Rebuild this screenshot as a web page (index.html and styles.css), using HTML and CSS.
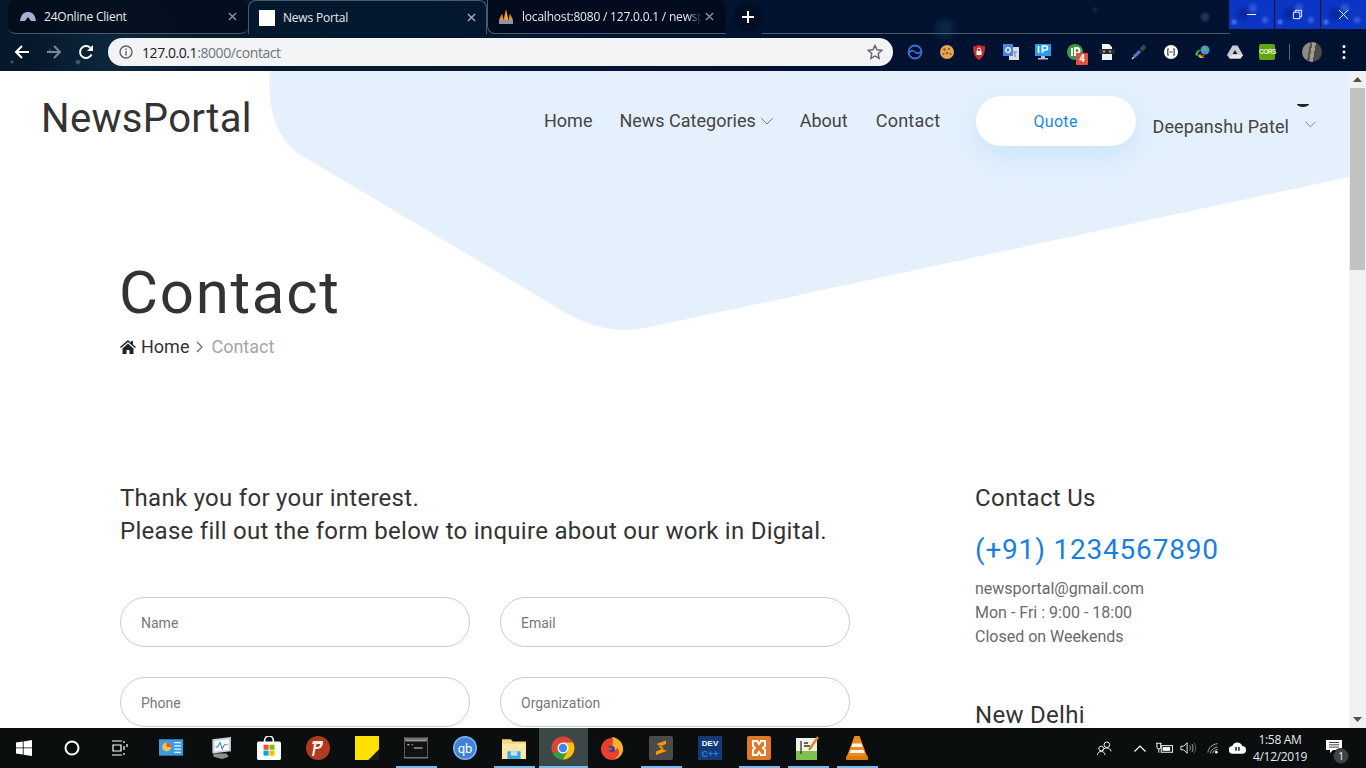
FILE: index.html
```html
<!DOCTYPE html>
<html lang="en">
<head>
<meta charset="utf-8">
<title>News Portal</title>
<link rel="stylesheet" href="styles.css">
</head>
<body>
<div class="browser">
  <div class="chrome">
  <div class="tabstrip">
    <div class="tab tab-inactive tab-first">
      <svg class="favicon" viewBox="0 0 16 16"><path d="M0 12C1 5 4 3 8 3s7 2 8 9H11L8 8l-3 4Z" fill="#9fb0d0"/></svg>
      <span class="tab-title">24Online Client</span>
      <svg class="tab-x" viewBox="0 0 10 10"><path d="M1 1l8 8M9 1L1 9" stroke="#8b96a3" stroke-width="1.5"/></svg>
    </div>
    <div class="tab tab-active">
      <span class="favicon favicon-white"></span>
      <span class="tab-title">News Portal</span>
      <svg class="tab-x" viewBox="0 0 10 10"><path d="M1 1l8 8M9 1L1 9" stroke="#a4adb6" stroke-width="1.5"/></svg>
    </div>
    <div class="tab tab-inactive tab-third">
      <svg class="favicon" viewBox="0 0 16 16"><path d="M1 11L4 4.500l1.500 6.500ZM5.500 11L8 0l2.500 11ZM10.500 11L12 4.500 15 11Z" fill="#e8912a"/><path d="M8 3l1.500 8h-1Z" fill="#f6cf6b"/><rect x="1" y="11" width="14" height="4" fill="#8d93a8"/></svg>
      <span class="tab-title tab-fade">localhost:8080 / 127.0.0.1 / newsp</span>
      <svg class="tab-x" viewBox="0 0 10 10"><path d="M1 1l8 8M9 1L1 9" stroke="#8b96a3" stroke-width="1.5"/></svg>
    </div>
    <div class="newtab"><svg viewBox="0 0 12 12"><path d="M6 0v12M0 6h12" stroke="#fff" stroke-width="2"/></svg></div>
    <div class="tab-rule"></div>
    <div class="winctl">
      <div class="winbtn"><svg viewBox="0 0 12 12"><path d="M1 6h10" stroke="#fff"/></svg></div>
      <div class="winbtn"><svg viewBox="0 0 12 12"><path d="M1.500 3.500h7v7h-7ZM3.500 3.500v-2h7v7h-2" fill="none" stroke="#fff"/></svg></div>
      <div class="winbtn"><svg viewBox="0 0 12 12"><path d="M1 1l10 10M11 1L1 11" stroke="#fff"/></svg></div>
    </div>
  </div>
  <div class="toolbar">
    <div class="navbtns">
      <svg class="navicon" viewBox="0 0 16 16"><path d="M15 8H2M8 2L2 8l6 6" fill="none" stroke="#fff" stroke-width="2"/></svg>
      <svg class="navicon" viewBox="0 0 16 16"><path d="M1 8h13M8 2l6 6-6 6" fill="none" stroke="#7b8791" stroke-width="2"/></svg>
      <svg class="navicon" viewBox="0 0 16 16"><path d="M13.500 10.500A6 6 0 1 1 12.300 3.800" fill="none" stroke="#fff" stroke-width="2"/><path d="M15 1v6H9Z" fill="#fff"/></svg>
    </div>
    <div class="omnibox">
      <svg class="info" viewBox="0 0 14 14"><circle cx="7" cy="7" r="6" fill="none" stroke="#5f6368" stroke-width="1.400"/><path d="M7 6v4.500M7 3.500v1.500" stroke="#5f6368" stroke-width="1.400"/></svg>
      <span class="url"><span class="url-host">127.0.0.1</span>:8000/contact</span>
      <svg class="star" viewBox="0 0 16 16"><path d="M8 1.500l2 4.300 4.700.6-3.500 3.200.9 4.700L8 12l-4.100 2.300.9-4.700L1.300 6.400 6 5.800Z" fill="none" stroke="#5f6368" stroke-width="1.400"/></svg>
    </div>
    <div class="exts">
      <span class="ext"><svg viewBox="0 0 16 16"><circle cx="8" cy="8" r="6.500" fill="none" stroke="#3f6fd8" stroke-width="1.800"/><path d="M2 9c2-3 4-3 6-1s4 2 6-1" fill="none" stroke="#3f6fd8" stroke-width="1.600"/></svg></span>
      <span class="ext"><svg viewBox="0 0 16 16"><circle cx="8" cy="8" r="7" fill="#e3a455"/><g fill="#8a5320"><circle cx="5.500" cy="5.500" r="1.200"/><circle cx="10" cy="5" r="1"/><circle cx="8" cy="9" r="1.200"/><circle cx="4.500" cy="10" r="1"/><circle cx="11.500" cy="10" r="1"/></g></svg></span>
      <span class="ext"><svg viewBox="0 0 16 16"><path d="M2 2.500L8 1l6 1.500c0 6-1 10-6 13.500C3 12.500 2 8.500 2 2.500Z" fill="#c62f2f"/><rect x="5.500" y="7" width="5" height="4" fill="#fff"/><path d="M6.500 7V5.500a1.500 1.500 0 0 1 3 0V7" fill="none" stroke="#fff"/></svg></span>
      <span class="ext"><svg viewBox="0 0 16 16"><rect x="6" y="3" width="10" height="13" fill="#d9dde1"/><rect x="0" y="0" width="10" height="12" fill="#4a86e8"/><circle cx="5" cy="6" r="2.300" fill="none" stroke="#fff" stroke-width="1.200"/><path d="M10 8h4M12 8v5" stroke="#7a8087"/></svg></span>
      <span class="ext"><svg viewBox="0 0 16 16"><rect width="16" height="12" fill="#2a9bf0"/><rect x="6" y="12" width="4" height="2" fill="#b9c2c9"/><rect x="3" y="14" width="10" height="1.500" fill="#b9c2c9"/><path d="M3.500 2v7M7.500 9V2h3a2 2 0 0 1 0 4h-3" fill="none" stroke="#fff" stroke-width="1.700"/></svg></span>
      <span class="ext ext-badged"><svg viewBox="0 0 16 16"><circle cx="8" cy="8" r="8" fill="#3e9a45"/><path d="M5 4v8M8 12V4h2a2.500 2.500 0 0 1 0 5H8" fill="none" stroke="#fff" stroke-width="2"/></svg><span class="badge">4</span></span>
      <span class="ext"><svg viewBox="0 0 16 16"><path d="M3 0h7l3 3v13H3Z" fill="#f1f1f1"/><rect x="0" y="5" width="16" height="5" rx="1.500" fill="#2b2b2b"/><circle cx="5" cy="7.500" r="1.200" fill="#999"/><circle cx="11" cy="7.500" r="1.200" fill="#999"/></svg></span>
      <span class="ext"><svg viewBox="0 0 16 16"><path d="M3 13l6-6" stroke="#4a7fd6" stroke-width="3"/><path d="M10 6l4-4" stroke="#444" stroke-width="4"/><path d="M1 15l2-2" stroke="#d5d5d5" stroke-width="1.500"/></svg></span>
      <span class="ext"><svg viewBox="0 0 16 16"><circle cx="8" cy="8" r="7" fill="#fff"/><path d="M6 5H4.800v6H6M10 5h1.200v6H10M6.500 8h3" fill="none" stroke="#333" stroke-width="1.100"/></svg></span>
      <span class="ext"><svg viewBox="0 0 16 16"><path d="M0 11C1 6 4 5 6 6c-2 1-3 3-3 6Z" fill="#3aa648"/><path d="M3 12c1 2 4 3 7 1-2 0-4-1-5-3Z" fill="#e2b32c"/><path d="M5 10c1 1.500 3 2 4.500 1" fill="none" stroke="#c3342b" stroke-width="1.200"/><circle cx="10" cy="6" r="4.500" fill="#4a95d9"/><path d="M8 3l4 1-1 3-2 0Z" fill="#67b24e"/></svg></span>
      <span class="ext"><svg viewBox="0 0 16 16"><path d="M5.500 1.500h5L16 11l-2.500 3.500h-11L0 11Z" fill="#c8cbcf"/><path d="M5 11h11l-2.500 3.500h-11Z" fill="#e9eaec"/><path d="M8 6l2.300 4H5.700Z" fill="#0a1a33"/></svg></span>
      <span class="ext"><span class="cors">CORS</span></span>
    </div>
    <span class="tool-sep"></span>
    <span class="avatar"></span>
    <svg class="kebab" viewBox="0 0 4 16"><circle cx="2" cy="2.500" r="1.500" fill="#fff"/><circle cx="2" cy="8" r="1.500" fill="#fff"/><circle cx="2" cy="13.500" r="1.500" fill="#fff"/></svg>
  </div>
  </div>

  <div class="viewport">
    <main class="page">
      <svg class="blob" viewBox="0 0 1349 270" aria-hidden="true"><path d="M270 0C266 38 278 68 299 83L551 233C578 251 610 264 645 257L1349 106V0Z" fill="#e4f1fd"/></svg>
      <header class="site-header">
        <div class="logo">NewsPortal</div>
        <nav class="nav">
          <a class="nav-link">Home</a>
          <a class="nav-link">News Categories<svg class="chev" viewBox="0 0 12 7"><path d="M.5.500L6 6 11.500.500" fill="none" stroke="#777"/></svg></a>
          <a class="nav-link">About</a>
          <a class="nav-link">Contact</a>
        </nav>
        <a class="quote">Quote</a>
        <div class="user">
          <span class="user-name">Deepanshu Patel</span>
          <svg class="chev user-chev" viewBox="0 0 12 7"><path d="M.5.500L6 6 11.500.500" fill="none" stroke="#777"/></svg>
          <span class="user-mark"></span>
        </div>
      </header>
      <section class="hero">
        <h1 class="hero-title">Contact</h1>
        <div class="crumbs">
          <svg class="home" viewBox="0 0 16 14"><path d="M8 0L0 7l1 1 7-6 7 6 1-1-3-2.600V1h-2v1.700ZM2.500 8.500V14H6.500v-4h3v4h4V8.500L8 3.500Z" fill="#222"/></svg>
          <span class="crumb">Home</span>
          <svg class="crumb-sep" viewBox="0 0 7 12"><path d="M1 1l5 5-5 5" fill="none" stroke="#666" stroke-width="1.200"/></svg>
          <span class="crumb crumb-current">Contact</span>
        </div>
      </section>
      <section class="content">
        <div class="form-col">
          <h2 class="lead">Thank you for your interest.<br>Please fill out the form below to inquire about our work in Digital.</h2>
          <form class="form-grid">
            <div class="field">Name</div>
            <div class="field">Email</div>
            <div class="field">Phone</div>
            <div class="field">Organization</div>
          </form>
        </div>
        <aside class="info-col">
          <h3 class="info-title">Contact Us</h3>
          <div class="phone">(+91) 1234567890</div>
          <p class="details">newsportal@gmail.com<br>Mon - Fri : 9:00 - 18:00<br>Closed on Weekends</p>
          <h3 class="info-title city">New Delhi</h3>
        </aside>
      </section>
    </main>
    <div class="scrollbar">
      <div class="sb-btn"><svg viewBox="0 0 9 5"><path d="M4.500 0L9 5H0Z" fill="#505050"/></svg></div>
      <div class="sb-track"><div class="sb-thumb"></div></div>
      <div class="sb-btn"><svg viewBox="0 0 9 5"><path d="M0 0h9L4.500 5Z" fill="#505050"/></svg></div>
    </div>
  </div>

  <footer class="taskbar">
    <div class="tb-item tb-sys"><svg class="tb-ic" viewBox="0 0 16 16"><path d="M0 2.500L6.800 1.500V7.500H0ZM7.600 1.400L16 0V7.500H7.600ZM0 8.300H6.800V14.500L0 13.500ZM7.600 8.300H16V16L7.600 14.700Z" fill="#fff"/></svg></div>
    <div class="tb-item tb-sys"><svg class="tb-ic" viewBox="0 0 16 16"><circle cx="8" cy="8" r="6.500" fill="none" stroke="#fff" stroke-width="2"/></svg></div>
    <div class="tb-item tb-sys"><svg class="tb-ic" viewBox="0 0 16 16"><path d="M0 1h10M0 15h10M1 5h8v6H1ZM12 1v2M12 6v4M12 13v2M15 4v3" fill="none" stroke="#fff" stroke-width="1.200"/></svg></div>
    <div class="tb-item tb-gap"><svg class="tb-ic tb-big" viewBox="0 0 22 16"><rect width="22" height="15" fill="#3a9be0"/><circle cx="7" cy="7" r="4" fill="#f6c04d"/><path d="M7 7V3a4 4 0 0 1 4 4Z" fill="#e4552c"/><path d="M14 3h6M14 6h6M14 9h6M14 12h6" stroke="#dff" stroke-width="1.200"/></svg></div>
    <div class="tb-item"><svg class="tb-ic tb-big" viewBox="0 0 22 20"><path d="M4 2l17-2v13L4 15Z" fill="#cfd3d6"/><path d="M6 3.500l13-1.500v9.500L6 13Z" fill="#fff"/><path d="M7 9l2 0 2-4 2 6 2-4 3 0" fill="none" stroke="#3b8ed8"/><path d="M5 15h12l2 3-6 2-8-2Z" fill="#8d9194"/></svg></div>
    <div class="tb-item"><svg class="tb-ic tb-big" viewBox="0 0 22 22"><path d="M7 6V4a4 4 0 0 1 8 0v2" fill="none" stroke="#fff" stroke-width="1.500"/><rect y="5" width="22" height="17" rx="1.500" fill="#fff"/><rect x="6" y="8" width="4.600" height="4.600" fill="#f25022"/><rect x="11.400" y="8" width="4.600" height="4.600" fill="#7fba00"/><rect x="6" y="13.400" width="4.600" height="4.600" fill="#00a4ef"/><rect x="11.400" y="13.400" width="4.600" height="4.600" fill="#ffb900"/></svg></div>
    <div class="tb-item"><svg class="tb-ic tb-big" viewBox="0 0 24 24"><circle cx="12" cy="12" r="12" fill="#b03a1e"/><path d="M7 5h10v1c0 5-3 7-6 7H9.500L8 20H6L8 8H6Z" fill="#f2ece6"/><path d="M10.500 8l-.6 3H11c2 0 3-1 3.200-3Z" fill="#b03a1e"/></svg></div>
    <div class="tb-item"><svg class="tb-ic tb-big" viewBox="0 0 18 18"><rect width="18" height="18" fill="#ffe100"/><path d="M10 18l8-8v8Z" fill="#1c1c1c"/></svg></div>
    <div class="tb-item tb-open"><svg class="tb-ic tb-big" viewBox="0 0 22 18"><rect width="22" height="18" fill="#111" stroke="#9a9a9a"/><rect x="1" y="1" width="20" height="2" fill="#9a9a9a"/><path d="M3 6h2M7 6h1M9 9h8" stroke="#ddd"/></svg></div>
    <div class="tb-item"><svg class="tb-ic tb-big" viewBox="0 0 24 24"><circle cx="12" cy="12" r="12" fill="#7fb4f0"/><circle cx="12" cy="12" r="10.500" fill="#3f83d9"/><text x="12" y="16.500" text-anchor="middle" class="qb">qb</text></svg></div>
    <div class="tb-item tb-open tb-split"><svg class="tb-ic tb-big" viewBox="0 0 22 20"><path d="M0 2h8l2 2h12v16H0Z" fill="#f6d77c"/><rect y="6" width="22" height="14" fill="#fbe7a6"/><path d="M5 13h12v7H5Z" fill="#3aa7e4"/><path d="M8 13h6v4H8Z" fill="#bfe6f8"/></svg></div>
    <div class="tb-item tb-open tb-active"><svg class="tb-ic tb-big" viewBox="0 0 24 24"><circle cx="12" cy="12" r="11.500" fill="#db4437"/><path d="M12 12L2 18a11.500 11.500 0 0 0 10 5.500l5-9Z" fill="#2f9e44"/><path d="M12 6.500h10A11.500 11.500 0 0 1 12 23.500l5-9Z" fill="#f4c20d"/><circle cx="12" cy="12" r="5.500" fill="#fff"/><circle cx="12" cy="12" r="4.200" fill="#4285f4"/></svg></div>
    <div class="tb-item"><svg class="tb-ic tb-big" viewBox="0 0 24 24"><circle cx="12" cy="13" r="11" fill="#e8402c"/><path d="M12 1c7 1 11 6 11 12s-5 10-9 10c5-2 7-8 3-11-1 2-3 3-5 2 0-4 2-8 0-13Z" fill="#fbb12d"/><path d="M7 11c2-2 8-2 8 2s-5 4-7 1c2 1 4 .5 4-1s-3-2-5-2Z" fill="#3a3f9e"/></svg></div>
    <div class="tb-item tb-open"><svg class="tb-ic tb-big" viewBox="0 0 24 24"><rect width="24" height="24" rx="2" fill="#4a4a4a"/><path d="M17 4.500L7.500 8l7.500 4-8 3.500v3.500L17.500 15 9.500 11l7.500-3Z" fill="#ff9800"/></svg></div>
    <div class="tb-item"><svg class="tb-ic tb-big" viewBox="0 0 24 24"><rect width="24" height="24" fill="#123a78"/><text x="12" y="10" text-anchor="middle" class="dev">DEV</text><text x="12" y="21" text-anchor="middle" class="cpp">C++</text></svg></div>
    <div class="tb-item tb-open"><svg class="tb-ic tb-big" viewBox="0 0 24 24"><rect width="24" height="24" rx="2" fill="#e07a2a"/><path d="M6 5h4l2 3 2-3h4v5l-2 2 2 2v5h-4l-2-3-2 3H6v-5l2-2-2-2Z" fill="none" stroke="#fff" stroke-width="2"/></svg></div>
    <div class="tb-item tb-open"><svg class="tb-ic tb-big" viewBox="0 0 24 24"><rect y="2" width="21" height="22" fill="#f2f2e8"/><rect y="15" width="21" height="9" fill="#7dc24b"/><path d="M5 5v13M8 7h4M8 10h6" stroke="#333" stroke-width="1.300"/><path d="M22 1L13 14" stroke="#d98b2b" stroke-width="2.500"/></svg></div>
    <div class="tb-item tb-open"><svg class="tb-ic tb-big" viewBox="0 0 22 24"><path d="M8.500 0h5L21 20H1Z" fill="#f08a1d"/><path d="M6.600 7.500h8.800l1.300 3.500H5.300ZM4.500 14h13l1 3h-15Z" fill="#f4f4f4"/><rect y="20" width="22" height="4" rx="1" fill="#e07b12"/></svg></div>
    <div class="tray">
      <svg class="tray-ic tray-people" viewBox="0 0 16 16"><circle cx="10.500" cy="4" r="3" fill="none" stroke="#fff"/><path d="M6 11c.5-2.500 2-3.500 4.500-3.500S14.500 9 15 11" fill="none" stroke="#fff"/><circle cx="4.500" cy="8" r="2.500" fill="none" stroke="#fff"/><path d="M0.500 15c.3-2.500 1.600-3.800 4-3.800s3.700 1.300 4 3.800" fill="none" stroke="#fff"/></svg>
      <svg class="tray-ic tray-chev" viewBox="0 0 12 7"><path d="M.5 6.500L6 1l5.500 5.500" fill="none" stroke="#fff" stroke-width="1.200"/></svg>
      <svg class="tray-ic tray-batt" viewBox="0 0 18 12"><rect x="5.500" y="3.500" width="12" height="7" fill="none" stroke="#fff"/><rect x="7" y="5" width="8" height="4" fill="#fff"/><path d="M1 1v4a2 2 0 0 0 4 0V1M3 7v4M0 1h6" fill="none" stroke="#fff"/></svg>
      <svg class="tray-ic tray-vol" viewBox="0 0 18 14"><path d="M1 5h3l4-4v12L4 9H1Z" fill="none" stroke="#fff"/><path d="M11 4c1 2 1 4 0 6M13.500 2.500c1.500 3 1.500 6 0 9" fill="none" stroke="#aaa"/><path d="M16 1c2 4 2 8 0 12" fill="none" stroke="#666"/></svg>
      <svg class="tray-ic tray-wifi" viewBox="0 0 16 14"><path d="M1 12C2 6 6 2 13 1M4 13c1-4 4-7 9-8M7 13c.5-2 2-4 6-5" fill="none" stroke="#c8c8c8"/><circle cx="11.500" cy="11.500" r="1.600" fill="#fff"/></svg>
      <svg class="tray-ic tray-cloud" viewBox="0 0 18 12"><path d="M4 12a4 4 0 0 1-.5-8A5.500 5.500 0 0 1 14 4a4 4 0 0 1 0 8Z" fill="#fff"/><path d="M7.500 5v4M10.500 5v4" stroke="#111" stroke-width="1.500"/></svg>
      <div class="clock"><span>1:58 AM</span><span>4/12/2019</span></div>
      <div class="notif"><svg viewBox="0 0 16 13"><path d="M0 0h16v10H7l-3 3v-3H0Z" fill="#fff"/><path d="M3 2.500h10M3 4.800h10M3 7.100h10" stroke="#111" stroke-width=".8"/></svg><span class="notif-count">1</span></div>
    </div>
  </footer>
</div>
</body>
</html>
```
FILE: styles.css
```css
* { box-sizing: border-box; }
html, body { margin: 0; height: 100%; overflow: hidden; }
body { font-family: Roboto, "Liberation Sans", sans-serif; background: #fff; color: #333; }
.browser { width: 1366px; height: 768px; display: flex; flex-direction: column; overflow: hidden; }

/* browser frame with a starfield theme */
.chrome {
  flex: none; height: 71px;
  background-color: #011230;
  background-image:
    radial-gradient(circle at 12px 62px, rgba(150,190,210,.35) 0 1px, transparent 2px),
    radial-gradient(circle at 78px 62px, rgba(150,190,210,.35) 0 1.500px, transparent 3px),
    radial-gradient(circle at 50px 50px, rgba(120,170,190,.22) 0 1px, transparent 2px),
    radial-gradient(circle at 1205px 17px, rgba(70,100,140,.45) 0 2px, transparent 6px),
    radial-gradient(circle at 1095px 10px, rgba(50,80,120,.3) 0 1px, transparent 4px),
    radial-gradient(circle at 945px 29px, rgba(40,90,120,.3) 0 3px, transparent 14px),
    radial-gradient(circle at 120px 55px, rgba(40,90,120,.22) 0 6px, transparent 90px),
    linear-gradient(90deg, #06192b 0, #04182f 400px, #011230 820px, #011230 100%);
}

/* tab strip */
.tabstrip { height: 34px; display: flex; align-items: stretch; padding-left: 8px; }
.tab {
  width: 239px; height: 34px; display: flex; align-items: center; padding: 0 11px 0 12px;
  border-radius: 8px 8px 0 0; color: #e6eaee; font: 12px "Open Sans", sans-serif; letter-spacing: -.2px;
}
.tab-inactive { background: rgba(1,6,20,.62); border-bottom: 1px solid #4c5b6b; }
.tab-first { width: 240px; border-radius: 8px 8px 8px 8px / 8px 8px 6px 6px; }
.tab-active { border: 1px solid #4c5b6b; border-bottom: 0; width: 239px; padding: 0 10px; }
.tab-third { border-left: 1px solid #4c5b6b; border-radius: 0 8px 0 8px; padding: 0 12px 0 10px; }
.tab-third .tab-x { margin-left: 3px; }
.favicon { width: 16px; height: 16px; flex: none; margin-right: 8px; }
.favicon-white { background: #fff; }
.tab-title { flex: 1; white-space: nowrap; overflow: hidden; }
.tab-fade { -webkit-mask-image: linear-gradient(90deg, #000 92%, transparent 100%); mask-image: linear-gradient(90deg, #000 92%, transparent 100%); }
.tab-x { width: 9px; height: 9px; flex: none; margin-left: 8px; }
.newtab { width: 28px; height: 28px; margin: 3px 0 0 8px; border-radius: 50%; background: #020e26; display: flex; align-items: center; justify-content: center; flex: none; }
.newtab svg { width: 12px; height: 12px; }
.tab-rule { flex: 1; border-bottom: 1px solid #4c5b6b; }
.winctl { display: flex; gap: 1px; height: 29px; margin-left: -1px; position: relative; flex: none; width: 137px; }
.winbtn {
  flex: 1; display: flex; align-items: center; justify-content: center;
  background-color: #0b35c4;
  background-image:
    radial-gradient(circle at 5px 22px, rgba(120,165,255,.5) 0 1px, transparent 4px),
    radial-gradient(circle at 24px 8px, rgba(110,150,250,.32) 0 2px, transparent 6px),
    radial-gradient(circle at 14px 14px, rgba(4,24,120,.45) 0 2px, transparent 9px),
    radial-gradient(circle at 36px 20px, rgba(120,165,255,.35) 0 1px, transparent 5px);
  background-size: 45px 29px;
}
.winbtn svg { width: 11px; height: 11px; }

/* toolbar */
.toolbar { height: 37px; display: flex; align-items: center; padding: 0 14px 1px 6px; }
.navbtns { display: flex; align-items: center; gap: 16px; width: 94px; margin-left: 8px; flex: none; }
.navicon { width: 16px; height: 16px; }
.omnibox { width: 785px; height: 28px; flex: none; border-radius: 14px; background: #f1f3f4; display: flex; align-items: center; padding: 0 10px 0 11px; }
.info { width: 14px; height: 14px; flex: none; margin-right: 9px; }
.url { flex: 1; font: 14px "Open Sans", sans-serif; letter-spacing: -.43px; color: #70757a; }
.url-host { color: #202124; }
.star { width: 16px; height: 16px; flex: none; }
.exts { display: flex; align-items: center; margin-left: 6px; flex: none; }
.ext { width: 32px; height: 28px; display: flex; align-items: center; justify-content: center; position: relative; }
.ext svg { width: 16px; height: 16px; }
.badge { position: absolute; left: 17px; top: 15px; width: 12px; height: 12px; background: #e74c3c; color: #fff; font: bold 10px/12px Roboto, sans-serif; text-align: center; border-radius: 1px; }
.cors { width: 16px; height: 16px; background: #5fa60e; color: #e9f7d4; font: bold 6.500px/16px "Liberation Sans", sans-serif; letter-spacing: -.5px; text-align: center; border-radius: 2px; white-space: nowrap; }
.tool-sep { width: 1px; height: 16px; background: #5a6672; margin: 0 12px 0 6px; flex: none; }
.avatar { width: 20px; height: 20px; border-radius: 50%; flex: none; background: linear-gradient(100deg, #8d8a82 0 35%, #555 35% 45%, #a09c92 45% 60%, #4a4a4a 60%); }
.kebab { width: 4px; height: 16px; margin-left: 20px; flex: none; }

/* page */
.viewport { height: 657px; flex: none; display: flex; overflow: hidden; }
.page { width: 1349px; flex: none; position: relative; overflow: hidden; background: #fff; }
.blob { position: absolute; left: 0; top: 0; width: 1349px; height: 270px; }
.site-header { position: relative; display: flex; align-items: flex-start; height: 100px; padding: 25px 0 0 41px; }
.logo { font-size: 40px; line-height: 46px; color: #333; width: 503px; flex: none; letter-spacing: .35px; }
.nav { display: flex; gap: 27px; font-size: 18px; line-height: 50px; color: #444; flex: none; }
.nav-link { display: flex; align-items: center; }
.nav-link:last-child { margin-left: 1px; letter-spacing: .25px; }
.chev { width: 12px; height: 7px; margin-left: 5px; }
.quote { width: 160px; height: 50px; border-radius: 25px; background: #fff; margin-left: 35.250px; color: #1a86e8; font-size: 16px; letter-spacing: .3px; display: flex; align-items: center; justify-content: center; flex: none; box-shadow: 0 10px 30px rgba(26,134,232,.13); }
.user { position: relative; margin-left: 17px; font-size: 18px; letter-spacing: .08px; color: #444; display: flex; align-items: center; height: 60px; flex: none; }
.user-name { white-space: nowrap; }
.user-chev { margin-left: 16px; margin-bottom: 4px; width: 11px; }
.user-mark { position: absolute; right: 7px; top: 8px; width: 12px; height: 3px; background: #222; border-radius: 0 0 6px 6px / 0 0 3px 3px; }
.hero { position: relative; padding: 87px 0 0 119px; height: 300px; }
.hero-title { margin: 0; font-size: 60px; font-weight: 400; line-height: 70px; color: #333; letter-spacing: 1.700px; }
.crumbs { display: flex; align-items: center; font-size: 18px; line-height: 24px; margin: 7px 0 0 1px; }
.home { width: 16px; height: 14px; margin-right: 5px; }
.crumb { color: #333; }
.crumb-sep { width: 7px; height: 12px; margin: 0 8px 0 7px; }
.crumb-current { color: #a5a5a5; }
.content { position: relative; display: flex; padding: 0 0 0 120px; }
.form-col { width: 855px; flex: none; }
.lead { margin: 11px 0 0; font-size: 24px; line-height: 33px; font-weight: 400; color: #333; white-space: nowrap; letter-spacing: .28px; }
.form-grid { display: grid; grid-template-columns: 350px 350px; column-gap: 30px; row-gap: 30px; margin-top: 49px; }
.field { height: 50px; border: 1px solid #ccc; border-radius: 25px; padding-left: 20px; font-size: 14px; line-height: 50px; color: #777; }
.info-col { flex: none; width: 300px; padding-top: 11px; }
.info-title { margin: 0; font-size: 24px; line-height: 33px; font-weight: 400; color: #333; letter-spacing: .3px; }
.phone { font-size: 28px; line-height: 34px; color: #1a7fe0; margin-top: 18px; letter-spacing: .8px; }
.details { margin: 10px 0 0; font-size: 16px; line-height: 24px; color: #6a6a6a; }
.city { margin-top: 50px; }
.scrollbar { width: 17px; flex: none; background: #f1f1f1; display: flex; flex-direction: column; }
.sb-btn { height: 17px; flex: none; display: flex; align-items: center; justify-content: center; }
.sb-btn svg { width: 9px; height: 5px; }
.sb-track { flex: 1; padding: 0 1px; }
.sb-thumb { height: 182px; background: #c1c1c1; }

/* taskbar */
.taskbar { height: 40px; flex: none; background: #0b0e0f; display: flex; align-items: stretch; }
.tb-item { width: 49px; flex: none; display: flex; align-items: center; justify-content: center; position: relative; }
.tb-sys { width: 48px; }
.tb-gap { margin-left: 2.500px; }
.tb-ic { width: 16px; height: 16px; }
.tb-big { width: 24px; height: 24px; }
.tb-open::after { content: ""; position: absolute; left: 4px; right: 4px; bottom: 0; height: 2px; background: #76b9ed; }
.tb-active { background: #3b4848; }
.tb-active::after { left: 0; right: 0; }
.qb { font: 13px Roboto, sans-serif; fill: #fff; }
.dev { font: bold 8px "Liberation Sans", sans-serif; fill: #fff; }
.cpp { font: bold 9px "Liberation Sans", sans-serif; fill: #2f7fd6; }
.tray { margin-left: auto; display: flex; align-items: center; color: #fff; flex: none; padding-right: 4px; }
.tray-ic { flex: none; }
.tray-people { width: 15px; height: 15px; margin-right: 22px; }
.tray-chev { width: 12px; height: 7px; margin-right: 10px; }
.tray-batt { width: 17px; height: 12px; margin-right: 7px; }
.tray-vol { width: 16px; height: 14px; margin-right: 11px; }
.tray-wifi { width: 13px; height: 13px; margin-right: 9px; }
.tray-cloud { width: 17px; height: 12px; margin-right: 3px; }
.clock { width: 62px; font: 12px/17px "Open Sans", sans-serif; letter-spacing: -.3px; text-align: center; display: flex; flex-direction: column; margin-right: 11px; color: #e8e8e8; }
.notif { width: 27px; height: 24px; position: relative; margin-right: 13px; flex: none; }
.notif svg { width: 16px; height: 13px; position: absolute; left: 4px; top: 4px; }
.notif-count { position: absolute; left: 11px; top: 12px; width: 16px; height: 16px; border-radius: 50%; background: #444; color: #fff; font: 10px/14px "Open Sans", sans-serif; text-align: center; border: 1px solid #222; }
```
